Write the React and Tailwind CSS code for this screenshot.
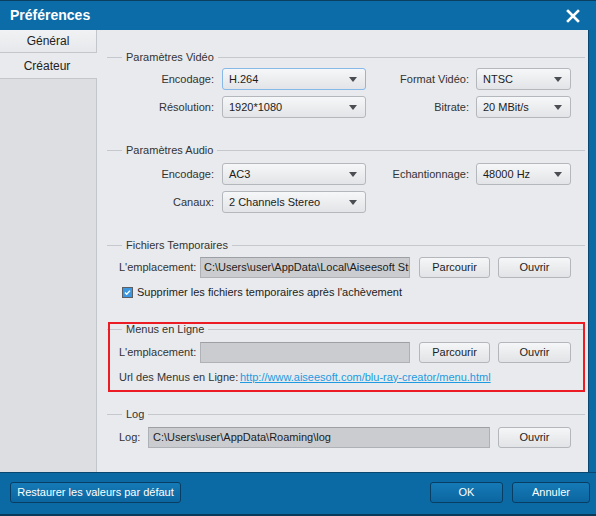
import { useState } from "react";

const FONT = "font-['Liberation_Sans',Arial,sans-serif]";

function Arrow() {
  return (
    <svg width="8" height="5" viewBox="0 0 8 5" className="shrink-0">
      <path d="M0 0h8L4 5z" fill="#4a4d52" />
    </svg>
  );
}

function Select({ value, w, focused }) {
  return (
    <div
      className={`flex h-[22px] items-center justify-between whitespace-nowrap rounded-[3px] border bg-linear-to-b from-[#f6f7f8] to-[#e2e4e7] pl-[6px] pr-[8px] text-[#1c1c1c] ${w} ${
        focused ? "border-[#86b8e8]" : "border-[#b4b7bb]"
      }`}
    >
      <span>{value}</span>
      <Arrow />
    </div>
  );
}

function Button({ children, w }) {
  return (
    <button
      type="button"
      className={`h-[21px] whitespace-nowrap rounded-[3px] border border-[#b3b6ba] bg-linear-to-b from-[#f5f6f7] to-[#e1e3e6] text-[11px] text-[#1c1c1c] ${w}`}
    >
      {children}
    </button>
  );
}

function PathField({ value, w }) {
  return (
    <div
      className={`h-[21px] shrink-0 overflow-hidden whitespace-nowrap border border-[#aeb1b5] border-t-[#9c9fa3] bg-[#caccd0] pl-[3px] leading-[19px] text-[#1c1c1c] ${w}`}
    >
      {value}
    </div>
  );
}

function Legend({ title, className = "" }) {
  return (
    <div className={`flex h-[14px] items-center ${className}`}>
      <div className="h-px w-[15px] bg-[#c5c8cc]" />
      <span className="whitespace-nowrap px-[4px] leading-[14px] text-[#333]">{title}</span>
      <div className="h-px flex-1 bg-[#c5c8cc]" />
    </div>
  );
}

function Label({ children, w }) {
  return <div className={`shrink-0 whitespace-nowrap text-right text-[#333] ${w}`}>{children}</div>;
}

function FooterButton({ children, w, className = "" }) {
  return (
    <button
      type="button"
      className={`h-[21px] whitespace-nowrap rounded-[3px] border border-[#083e63] bg-linear-to-b from-[#157ab6] to-[#0c66a0] text-[11px] text-white ${w} ${className}`}
    >
      {children}
    </button>
  );
}

export default function App() {
  const [purge, setPurge] = useState(true);

  return (
    <div className={`flex h-[516px] w-[596px] flex-col overflow-hidden bg-[#0b69a3] text-[11px] ${FONT}`}>
      {/* title bar */}
      <div className="flex h-[30px] shrink-0 items-center justify-between border-t border-[#0a3f62] bg-[#0b6ca7] pl-[10px] pr-[16px]">
        <span className="text-[14px] font-bold text-white">Préférences</span>
        <svg width="14" height="14" viewBox="0 0 14 14">
          <path d="M2 2l10 10M12 2L2 12" stroke="#fff" strokeWidth="2.6" strokeLinecap="square" />
        </svg>
      </div>

      <div className="flex h-[442px] shrink-0">
        {/* tabs */}
        <div className="flex w-[97px] shrink-0 flex-col text-[12px]">
          <div className="flex h-[23px] items-center justify-center border-b border-r border-[#c3c6ca] bg-linear-to-b from-[#f1f2f4] to-[#e6e8eb] text-[#222]">
            Général
          </div>
          <div className="flex h-[25px] items-center justify-center bg-[#e8eaed] pr-[3px] text-[#222]">Créateur</div>
          <div className="flex-1 border-r border-t border-[#c3c6ca] bg-[#dcdee2]" />
        </div>

        {/* content */}
        <div className="flex-1 bg-[#e8eaed] pl-[10px] pr-[3px] pt-[20px]">
          <Legend title="Paramètres Vidéo" />
          <div className="mt-[4px] flex items-center">
            <Label w="w-[107px]">Encodage:</Label>
            <div className="ml-[8px]">
              <Select value="H.264" w="w-[144px]" focused />
            </div>
            <Label w="w-[103px]">Format Vidéo:</Label>
            <div className="ml-[7px]">
              <Select value="NTSC" w="w-[95px]" />
            </div>
          </div>
          <div className="mt-[6px] flex items-center">
            <Label w="w-[107px]">Résolution:</Label>
            <div className="ml-[8px]">
              <Select value="1920*1080" w="w-[144px]" />
            </div>
            <Label w="w-[103px]">Bitrate:</Label>
            <div className="ml-[7px]">
              <Select value="20 MBit/s" w="w-[95px]" />
            </div>
          </div>

          <Legend title="Paramètres Audio" className="mt-[25px]" />
          <div className="mt-[6px] flex items-center">
            <Label w="w-[107px]">Encodage:</Label>
            <div className="ml-[8px]">
              <Select value="AC3" w="w-[144px]" />
            </div>
            <Label w="w-[103px]">Echantionnage:</Label>
            <div className="ml-[7px]">
              <Select value="48000 Hz" w="w-[95px]" />
            </div>
          </div>
          <div className="mt-[6px] flex items-center">
            <Label w="w-[107px]">Canaux:</Label>
            <div className="ml-[8px]">
              <Select value="2 Channels Stereo" w="w-[144px]" />
            </div>
          </div>

          <Legend title="Fichiers Temporaires" className="mt-[25px]" />
          <div className="mt-[5px] flex items-center pl-[12px]">
            <div className="w-[81px] shrink-0 whitespace-nowrap text-[#333]">L'emplacement:</div>
            <PathField value={"C:\\Users\\user\\AppData\\Local\\Aiseesoft Stu"} w="w-[210px]" />
            <div className="ml-[9px]">
              <Button w="w-[71px]">Parcourir</Button>
            </div>
            <div className="ml-[8px]">
              <Button w="w-[73px]">Ouvrir</Button>
            </div>
          </div>
          <label className="mt-[6px] flex h-[16px] items-center whitespace-nowrap pl-[15px] text-[#222]">
            <button
              type="button"
              onClick={() => setPurge(!purge)}
              className="flex h-[11px] w-[11px] items-center justify-center border border-[#5b5e62] bg-white"
            >
              {purge && (
                <span className="flex h-[9px] w-[9px] items-center justify-center bg-[#3d97e0]">
                  <svg width="7" height="7" viewBox="0 0 7 7">
                    <path d="M1 3.6l1.7 1.7L6 1.6" stroke="#fff" strokeWidth="1.4" fill="none" />
                  </svg>
                </span>
              )}
            </button>
            <span className="ml-[4px]">Supprimer les fichiers temporaires après l'achèvement</span>
          </label>

          <div className="relative mt-[22px]">
            <Legend title="Menus en Ligne" />
            <div className="mt-[6px] flex items-center pl-[12px]">
              <div className="w-[81px] shrink-0 whitespace-nowrap text-[#333]">L'emplacement:</div>
              <PathField value="" w="w-[210px]" />
              <div className="ml-[9px]">
                <Button w="w-[71px]">Parcourir</Button>
              </div>
              <div className="ml-[8px]">
                <Button w="w-[73px]">Ouvrir</Button>
              </div>
            </div>
            <div className="mt-[6px] flex h-[16px] items-center whitespace-nowrap pl-[12px]">
              <div className="w-[121px] shrink-0 text-[#333]">Url des Menus en Ligne:</div>
              <a href="#" className="text-[#1e9be0] underline">
                http://www.aiseesoft.com/blu-ray-creator/menu.html
              </a>
            </div>
            {/* annotation */}
            <div className="pointer-events-none absolute left-[1px] top-0 h-[70px] w-[477px] border-2 border-[#ec1c24]" />
          </div>

          <Legend title="Log" className="mt-[22px]" />
          <div className="mt-[6px] flex items-center pl-[12px]">
            <div className="w-[29px] shrink-0 text-[#333]">Log:</div>
            <PathField value={"C:\\Users\\user\\AppData\\Roaming\\log"} w="w-[342px] pl-[4px]" />
            <div className="ml-[8px]">
              <Button w="w-[73px]">Ouvrir</Button>
            </div>
          </div>
        </div>

        <div className="w-[8px] shrink-0 border-l border-[#0a4770] bg-[#0b69a3]" />
      </div>

      {/* footer */}
      <div className="flex h-[44px] shrink-0 items-start border-b-2 border-t border-b-[#0a3a5a] border-t-[#0a4770] bg-[#0b69a3] pl-[10px] pr-[6px] pt-[9px]">
        <FooterButton w="w-[171px]">Restaurer les valeurs par défaut</FooterButton>
        <div className="flex-1" />
        <FooterButton w="w-[73px]">OK</FooterButton>
        <FooterButton w="w-[78px]" className="ml-[9px]">
          Annuler
        </FooterButton>
      </div>
    </div>
  );
}
